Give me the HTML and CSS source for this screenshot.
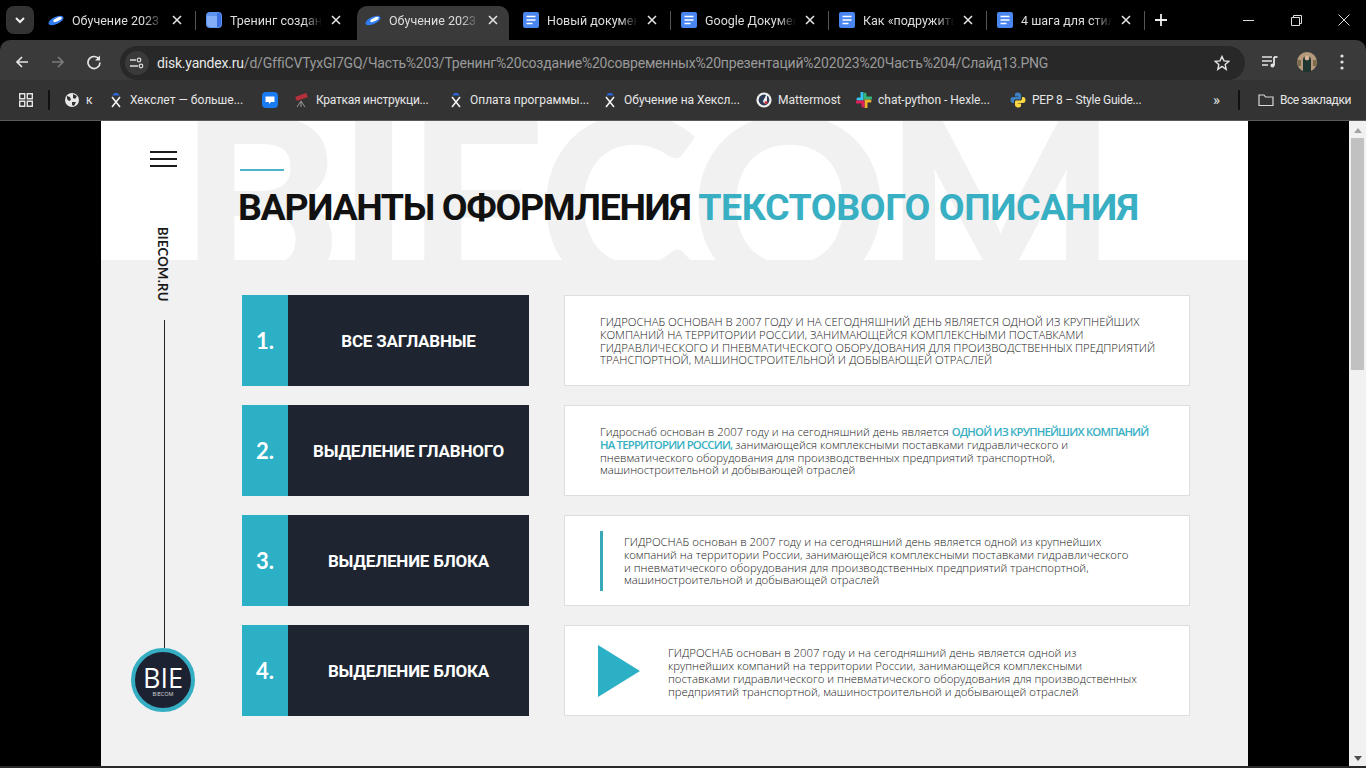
FILE: index.html
```html
<!DOCTYPE html>
<html lang="ru">
<head>
<meta charset="utf-8">
<title>Слайд13</title>
<link rel="stylesheet" href="styles.css">
</head>
<body>
<svg class="defs" width="0" height="0" aria-hidden="true">
  <symbol id="i-close" viewBox="0 0 12 12"><path d="M2 2l8 8M10 2l-8 8" stroke="#e3e3e3" stroke-width="1.6" fill="none"/></symbol>
  <symbol id="i-disk" viewBox="0 0 16 16"><ellipse cx="8" cy="8.500" rx="8" ry="3.600" transform="rotate(-25 8 8.500)" fill="#2f7bf0"/><ellipse cx="9.500" cy="7.500" rx="4.600" ry="1.700" transform="rotate(-25 9.500 7.500)" fill="#fff"/></symbol>
  <symbol id="i-doc" viewBox="0 0 16 16"><rect width="16" height="16" rx="2" fill="#4a86f0"/><path d="M3.500 4.500h9M3.500 8h9M3.500 11.500h6" stroke="#fff" stroke-width="1.700"/></symbol>
  <symbol id="i-cube" viewBox="0 0 16 16"><rect width="16" height="16" rx="4" fill="#5f93f2"/><path d="M1 4h10v11H5a4 4 0 0 1-4-4z" fill="#84aff8"/><path d="M11 1h1a3 3 0 0 1 3 3v8a3 3 0 0 1-3 3h-1z" fill="#3d6fe0"/></symbol>
  <symbol id="i-hex" viewBox="0 0 16 16"><path d="M4.500 3.500C5 1.500 6.500 1 8 1s3 .5 3.500 2.500z" fill="#2c66d8"/><path d="M4 5l8 10M12 5L4 15" stroke="#f2f2f2" stroke-width="1.600" fill="none"/></symbol>
</svg>

<header class="tabstrip">
  <button class="tablist" aria-label="Вкладки"><svg width="12" height="8" viewBox="0 0 12 8"><path d="M2 2l4 4 4-4" stroke="#eee" stroke-width="2" fill="none"/></svg></button>
  <div class="tab tab-first"><svg class="fav"><use href="#i-disk"/></svg><span class="tab-title">Обучение 2023</span><svg class="x"><use href="#i-close"/></svg></div>
  <div class="tab tab-second"><svg class="fav"><use href="#i-cube"/></svg><span class="tab-title">Тренинг создание</span><svg class="x"><use href="#i-close"/></svg></div>
  <div class="tab active"><svg class="fav"><use href="#i-disk"/></svg><span class="tab-title">Обучение 2023</span><svg class="x"><use href="#i-close"/></svg></div>
  <div class="tab"><svg class="fav"><use href="#i-doc"/></svg><span class="tab-title">Новый документ</span><svg class="x"><use href="#i-close"/></svg></div>
  <div class="tab sep"><svg class="fav"><use href="#i-doc"/></svg><span class="tab-title">Google Документы</span><svg class="x"><use href="#i-close"/></svg></div>
  <div class="tab sep"><svg class="fav"><use href="#i-doc"/></svg><span class="tab-title">Как «подружить»</span><svg class="x"><use href="#i-close"/></svg></div>
  <div class="tab sep sep-end"><svg class="fav"><use href="#i-doc"/></svg><span class="tab-title">4 шага для стиля</span><svg class="x"><use href="#i-close"/></svg></div>
  <svg class="newtab" width="12" height="12" viewBox="0 0 12 12"><path d="M6 0v12M0 6h12" stroke="#eee" stroke-width="1.800"/></svg>
  <div class="winctl">
    <svg width="11" height="11" viewBox="0 0 11 11"><path d="M0 5.500h11" stroke="#ddd"/></svg>
    <svg width="11" height="11" viewBox="0 0 11 11"><path d="M.5 2.500h8v8h-8zM2.500 2.500v-2h8v8h-2" stroke="#ddd" fill="none"/></svg>
    <svg width="12" height="12" viewBox="0 0 12 12"><path d="M.5.5l11 11M11.500.5l-11 11" stroke="#ddd" fill="none"/></svg>
  </div>
</header>

<nav class="toolbar">
  <svg class="tool" viewBox="0 0 16 16"><path d="M14 8H3M8 3L3 8l5 5" stroke="#e3e3e3" stroke-width="1.700" fill="none"/></svg>
  <svg class="tool" viewBox="0 0 16 16"><path d="M2 8h11M8 3l5 5-5 5" stroke="#7b7b7b" stroke-width="1.700" fill="none"/></svg>
  <svg class="tool" viewBox="0 0 16 16"><path d="M13.200 5.500A6 6 0 1 0 14 8.500" stroke="#e3e3e3" stroke-width="1.700" fill="none"/><path d="M14 1.500v5h-5z" fill="#e3e3e3"/></svg>
  <div class="omnibox">
    <span class="site-ic"><svg width="14" height="12" viewBox="0 0 14 12"><path d="M0 3h6M0 9h8" stroke="#ddd" stroke-width="1.300"/><circle cx="9" cy="3" r="1.800" stroke="#ddd" stroke-width="1.200" fill="none"/><circle cx="11" cy="9" r="1.800" stroke="#ddd" stroke-width="1.200" fill="none"/></svg></span>
    <span class="url"><b>disk.yandex.ru</b>/d/GffiCVTyxGI7GQ/Часть%203/Тренинг%20создание%20современных%20презентаций%202023%20Часть%204/Слайд13.PNG</span>
    <svg class="star" width="16" height="16" viewBox="0 0 16 16"><path d="M8 1.500l2 4.400 4.700.5-3.500 3.200 1 4.700L8 11.400l-4.200 2.900 1-4.700L1.300 6.400 6 5.900z" stroke="#e3e3e3" stroke-width="1.400" fill="none"/></svg>
  </div>
  <svg class="media" width="16" height="14" viewBox="0 0 16 14"><path d="M0 2h10M0 6h10M0 10h6" stroke="#e3e3e3" stroke-width="1.600"/><path d="M12 2v8.500" stroke="#e3e3e3" stroke-width="1.800"/><path d="M12 2h3.500" stroke="#e3e3e3" stroke-width="1.800"/><circle cx="10.500" cy="10.500" r="2" fill="#e3e3e3"/></svg>
  <svg class="avatar" width="20" height="20" viewBox="0 0 20 20"><circle cx="10" cy="10" r="10" fill="#b59a7c"/><path d="M6 20V8a4 4 0 0 1 8 0v12z" fill="#20352f"/><circle cx="10" cy="6" r="2.400" fill="#d9b69a"/><path d="M0 8h4v6H1zM16 8h4l-1 6h-3z" fill="#7d6a4a"/></svg>
  <svg class="kebab" width="4" height="16" viewBox="0 0 4 16"><circle cx="2" cy="2" r="1.600" fill="#e3e3e3"/><circle cx="2" cy="8" r="1.600" fill="#e3e3e3"/><circle cx="2" cy="14" r="1.600" fill="#e3e3e3"/></svg>
</nav>

<nav class="bookmarks">
  <svg class="apps" width="14" height="14" viewBox="0 0 14 14"><path d="M.7.7h5v5h-5zM8.300.7h5v5h-5zM.7 8.300h5v5h-5zM8.300 8.300h5v5h-5z" stroke="#e3e3e3" stroke-width="1.400" fill="none"/></svg>
  <span class="bm-sep"></span>
  <div class="bm bm-k"><svg class="bm-ic" viewBox="0 0 16 16"><circle cx="8" cy="8" r="7" fill="#e8e8e8"/><path d="M3 4l3 1 1 3-2 1-2-2zM9 2l4 2-2 3-2-1zM8 10l4 0-2 4-2-1z" fill="#333"/></svg><span>к</span></div>
  <div class="bm"><svg class="bm-ic"><use href="#i-hex"/></svg><span>Хекслет — больше...</span></div>
  <div class="bm bm-icon"><svg class="bm-ic" viewBox="0 0 16 16"><rect width="16" height="16" rx="4" fill="#1a7bf2"/><path d="M3.500 4.500h9v5.500H9l-2 2v-2H3.500z" fill="#fff"/></svg></div>
  <div class="bm"><svg class="bm-ic" viewBox="0 0 16 16"><path d="M1 5l11-4 2 4-11 4z" fill="#b5303a"/><path d="M7 9L3 15M7 9l0 6M7 9l4 6" stroke="#999" stroke-width="1"/></svg><span class="bm-tight">Краткая инструкци...</span></div>
  <div class="bm"><svg class="bm-ic"><use href="#i-hex"/></svg><span>Оплата программы...</span></div>
  <div class="bm"><svg class="bm-ic"><use href="#i-hex"/></svg><span>Обучение на Хексл...</span></div>
  <div class="bm bm-mm"><svg class="bm-ic" viewBox="0 0 16 16"><circle cx="8" cy="8" r="7.600" fill="#f0f0f0"/><circle cx="8" cy="8" r="5.400" fill="#2a3b55"/><path d="M11 1.500L7 9a2.500 2.500 0 0 0 4 2z" fill="#f0f0f0"/><circle cx="10" cy="10.500" r="1.600" fill="#d23a4c"/></svg><span>Mattermost</span></div>
  <div class="bm bm-slack"><svg class="bm-ic" viewBox="0 0 16 16"><path d="M6 1v6H2" stroke="#36c5f0" stroke-width="3" fill="none" stroke-linecap="round"/><path d="M15 6H9V2" stroke="#2eb67d" stroke-width="3" fill="none" stroke-linecap="round"/><path d="M10 15V9h4" stroke="#ecb22e" stroke-width="3" fill="none" stroke-linecap="round"/><path d="M1 10h6v4" stroke="#e01e5a" stroke-width="3" fill="none" stroke-linecap="round"/></svg><span>chat-python - Hexle...</span></div>
  <div class="bm bm-py"><svg class="bm-ic" viewBox="0 0 16 16"><path d="M8 .5C5 .5 5 2 5 3v1.500h3.200V5H3C1.500 5 .5 6.300.5 8s1 3 2.500 3H4V9.500C4 8 5 7.500 6 7.500h3.500c1 0 1.500-.7 1.500-1.500V3c0-1.500-1.500-2.500-3-2.500z" fill="#3e7fc1"/><path d="M8 15.500c3 0 3-1.500 3-2.500v-1.500H7.800V11H13c1.500 0 2.500-1.300 2.500-3S14.500 5 13 5h-1v1.500C12 8 11 8.500 10 8.500H6.500C5.500 8.500 5 9.200 5 10v3c0 1.500 1.500 2.500 3 2.500z" fill="#fcd744"/></svg><span class="bm-tight">PEP 8 – Style Guide...</span></div>
  <span class="bm-more">»</span>
  <span class="bm-sep"></span>
  <div class="bm bm-all"><svg class="bm-ic" viewBox="0 0 16 16"><path d="M1 3h5l1.500 2H15v8.500H1z" stroke="#d8d8d8" stroke-width="1.200" fill="none"/></svg><span>Все закладки</span></div>
</nav>

<main class="viewer">
  <section class="slide">
    <div class="band" aria-hidden="true"><span class="watermark">BIECOM</span></div>
    <aside class="rail">
      <div class="burger"><i></i><i></i><i></i></div>
      <div class="brand">BIECOM.RU</div>
      <div class="rail-line"></div>
      <div class="logo"><span class="logo-big">BIE</span><span class="logo-small">BIECOM</span></div>
    </aside>
    <div class="content">
      <header class="head">
        <div class="accent"></div>
        <h1 class="title">ВАРИАНТЫ ОФОРМЛЕНИЯ <em>ТЕКСТОВОГО ОПИСАНИЯ</em></h1>
      </header>
      <div class="rows">
        <div class="label"><span class="num">1.</span><span class="name">ВСЕ ЗАГЛАВНЫЕ</span></div>
        <div class="card"><p class="txt txt-caps">ГИДРОСНАБ ОСНОВАН В 2007 ГОДУ И НА СЕГОДНЯШНИЙ ДЕНЬ ЯВЛЯЕТСЯ ОДНОЙ ИЗ КРУПНЕЙШИХ<br>КОМПАНИЙ НА ТЕРРИТОРИИ РОССИИ, ЗАНИМАЮЩЕЙСЯ КОМПЛЕКСНЫМИ ПОСТАВКАМИ<br>ГИДРАВЛИЧЕСКОГО И ПНЕВМАТИЧЕСКОГО ОБОРУДОВАНИЯ ДЛЯ ПРОИЗВОДСТВЕННЫХ ПРЕДПРИЯТИЙ<br>ТРАНСПОРТНОЙ, МАШИНОСТРОИТЕЛЬНОЙ И ДОБЫВАЮЩЕЙ ОТРАСЛЕЙ</p></div>

        <div class="label"><span class="num">2.</span><span class="name">ВЫДЕЛЕНИЕ ГЛАВНОГО</span></div>
        <div class="card"><p class="txt">Гидроснаб основан в 2007 году и на сегодняшний день является <strong>ОДНОЙ ИЗ КРУПНЕЙШИХ КОМПАНИЙ<br>НА ТЕРРИТОРИИ РОССИИ,</strong> занимающейся комплексными поставками гидравлического и<br>пневматического оборудования для производственных предприятий транспортной,<br>машиностроительной и добывающей отраслей</p></div>

        <div class="label"><span class="num">3.</span><span class="name">ВЫДЕЛЕНИЕ БЛОКА</span></div>
        <div class="card"><span class="bar"></span><p class="txt">ГИДРОСНАБ основан в 2007 году и на сегодняшний день является одной из крупнейших<br>компаний на территории России, занимающейся комплексными поставками гидравлического<br>и пневматического оборудования для производственных предприятий транспортной,<br>машиностроительной и добывающей отраслей</p></div>

        <div class="label"><span class="num">4.</span><span class="name">ВЫДЕЛЕНИЕ БЛОКА</span></div>
        <div class="card card-tri"><svg class="tri" width="42" height="52" viewBox="0 0 42 52"><path d="M0 0l42 26L0 52z" fill="#2cb0c6"/></svg><p class="txt txt-low">ГИДРОСНАБ основан в 2007 году и на сегодняшний день является одной из<br>крупнейших компаний на территории России, занимающейся комплексными<br>поставками гидравлического и пневматического оборудования для производственных<br>предприятий транспортной, машиностроительной и добывающей отраслей</p></div>
      </div>
    </div>
  </section>
  <div class="scrollbar"><span class="up"></span><span class="thumb"></span><span class="down"></span></div>
</main>
<div class="bottom-strip"></div>
</body>
</html>
```

FILE: styles.css
```css
* { box-sizing: border-box; }
html, body { margin: 0; height: 768px; overflow: hidden; background: #000; }
body { display: flex; flex-direction: column; font-family: Roboto, "Noto Sans", sans-serif; color: #e3e3e3; }
.defs { position: absolute; }

.tabstrip { height: 40px; display: flex; align-items: flex-end; background: #000; flex: none; position: relative; }
.tablist { width: 28px; height: 28px; margin: 0 6px 6px 6px; border: 0; border-radius: 8px; background: #333; display: flex; align-items: center; justify-content: center; padding: 0; align-self: flex-end; flex: none; }
.tab { width: 158px; height: 34px; display: flex; align-items: center; padding: 0 15px 6px 8px; position: relative; flex: none; }
.tab-second { width: 159px; }
.tab.sep::before, .tab-first::after, .sep-end::after { content: ""; position: absolute; top: 5px; height: 19px; width: 1px; background: #555; }
.tab.sep::before { left: -3px; }
.tab-first::after { right: 2px; }
.sep-end::after { right: 2px; }
.tab.active { background: #3a3a3a; border-radius: 10px 10px 0 0; width: 152px; margin-right: 6px; padding-right: 10px; }
.fav { width: 16px; height: 16px; flex: none; margin-right: 8px; }
.tab-title { font-size: 12.500px; flex: 1; overflow: hidden; white-space: nowrap; color: #dedede; -webkit-mask-image: linear-gradient(90deg, #000 80%, transparent 100%); mask-image: linear-gradient(90deg, #000 80%, transparent 100%); min-width: 0; }
.x { width: 12px; height: 12px; flex: none; margin-left: 8px; }
.newtab { margin: 0 0 14px 8px; flex: none; }
.winctl { margin-left: auto; width: 123px; display: flex; justify-content: space-between; align-items: center; padding: 0 16px 0 0; height: 40px; flex: none; }

.toolbar { height: 40px; background: #3a3a3a; border-radius: 10px 10px 0 0; display: flex; align-items: flex-end; flex: none; padding-left: 14px; }
.tool { width: 16px; height: 16px; margin: 0 20px 10px 0; flex: none; }
.omnibox { width: 1125px; height: 34px; margin-left: -2px; background: #282828; border-radius: 17px; display: flex; align-items: center; padding: 0 15px 0 5px; flex: none; }
.site-ic { width: 24px; height: 24px; border-radius: 50%; background: #3a3a3a; display: flex; align-items: center; justify-content: center; margin-right: 8px; flex: none; }
.url { font-size: 14px; color: #9a9a9a; white-space: nowrap; letter-spacing: -.2px; flex: 1; overflow: hidden; }
.url b { font-weight: 400; color: #e6e6e6; }
.star { flex: none; }
.media { margin: 0 0 11px 17px; flex: none; }
.avatar { margin: 0 0 8px 19px; flex: none; }
.kebab { margin: 0 0 10px 23px; flex: none; }

.bookmarks { height: 41px; background: #333; border-bottom: 1px solid #5a5a5a; display: flex; align-items: center; flex: none; padding-left: 19px; font-size: 12px; white-space: nowrap; }
.apps { flex: none; margin-right: 15px; }
.bm-sep { width: 2px; height: 20px; background: #111; flex: none; }
.bm { display: flex; align-items: center; gap: 6px; width: 154px; flex: none; color: #e6e6e6; }
.bm-ic { width: 16px; height: 16px; flex: none; }
.bm-tight { letter-spacing: -.25px; }
.bm-k { width: 44px; margin-left: 14px; }
.bm-icon { width: 32px; }
.bm-mm { width: 100px; }
.bm-slack { width: 154px; }
.bm-py { width: 203px; }
.bm-more { width: 25px; font-size: 15px; flex: none; }
.bm-all { margin-left: 18px; width: auto; }
.bm-all span { letter-spacing: -.45px; }

.viewer { flex: 1; min-height: 0; display: flex; background: #000; }
.slide { width: 1147px; margin-left: 101px; margin-right: 101px; position: relative; background: #f1f1f1; display: flex; flex: none; overflow: hidden; }
.band { position: absolute; left: 0; right: 0; top: 0; height: 139px; background: #fff; overflow: hidden; }
.watermark { position: absolute; left: 78px; top: -70px; font: 900 245px/1.2 Lato, sans-serif; color: #f1f1f1; letter-spacing: -5px; white-space: nowrap; }

.rail { width: 124px; display: flex; flex-direction: column; align-items: center; padding-top: 30px; position: relative; flex: none; }
.burger { width: 27px; display: flex; flex-direction: column; gap: 5px; }
.burger i { height: 2px; background: #1a1a1a; display: block; }
.brand { writing-mode: vertical-rl; font: 700 13px/13px Lato, sans-serif; color: #1a1a1a; margin-top: 60px; height: 74px; letter-spacing: .3px; white-space: nowrap; margin-left: -1px; }
.rail-line { width: 1.500px; height: 328px; background: #222; margin-top: 19px; margin-left: 3px; }
.logo { width: 64px; height: 64px; border-radius: 50%; background: #1d2233; border: 4px solid #35aec3; display: flex; flex-direction: column; align-items: center; justify-content: center; flex: none; color: #fff; }
.logo-big { font: 400 27px/26px "Open Sans", sans-serif; margin-top: 2px; }
.logo-small { font: 400 5.500px/7px "Open Sans", sans-serif; color: #ddd; }

.content { flex: 1; padding-right: 58px; position: relative; min-width: 0; }
.head { height: 174px; padding: 48px 0 0 13px; }
.accent { width: 44px; height: 1.500px; background: #4fb5c6; margin-left: 2px; }
.title { margin: 13px 0 0; font: 700 37.500px/46px Roboto, sans-serif; letter-spacing: -1.37px; color: #111; white-space: nowrap; }
.title em { font-style: normal; color: #38afc3; letter-spacing: -.43px; }

.rows { margin-left: 17px; display: grid; grid-template-columns: 287px 626px; grid-auto-rows: 91px; column-gap: 35px; row-gap: 19px; }
.label { background: #1e2530; display: flex; color: #fff; }
.num { width: 46px; background: #2cb0c6; font: 700 22px/92px Lato, sans-serif; text-align: center; flex: none; }
.name { flex: 1; font: 700 17px/92px Roboto, sans-serif; letter-spacing: -.2px; text-align: center; white-space: nowrap; }
.card { background: #fff; border: 1px solid #dedede; display: flex; align-items: center; padding-left: 35px; }
.txt { margin: 0; padding-top: 2px; font: 300 11.350px/12.900px "Open Sans", sans-serif; color: #222; white-space: nowrap; }
.txt-caps { letter-spacing: -.02px; }
.txt-low { padding-top: 5px; line-height: 12.800px; }
.txt strong { color: #38afc3; font-weight: 600; letter-spacing: -.8px; }
.bar { width: 3px; height: 60px; background: #38a9b8; margin-right: 21px; flex: none; }
.card-tri { padding-left: 33px; }
.tri { margin-right: 28px; flex: none; }

.scrollbar { width: 17px; background: #f1f1f1; display: flex; flex-direction: column; align-items: center; flex: none; position: relative; }
.up { width: 0; height: 0; border: 4px solid transparent; border-top: 0; border-bottom: 5px solid #a3a3a3; margin-top: 7px; }
.thumb { width: 13px; height: 232px; margin-top: 5px; background: #c1c1c1; }
.down { width: 0; height: 0; border: 4px solid transparent; border-bottom: 0; border-top: 5px solid #505050; margin-top: auto; margin-bottom: 5px; }
.bottom-strip { height: 2px; background: #2a2a2a; flex: none; }
```
